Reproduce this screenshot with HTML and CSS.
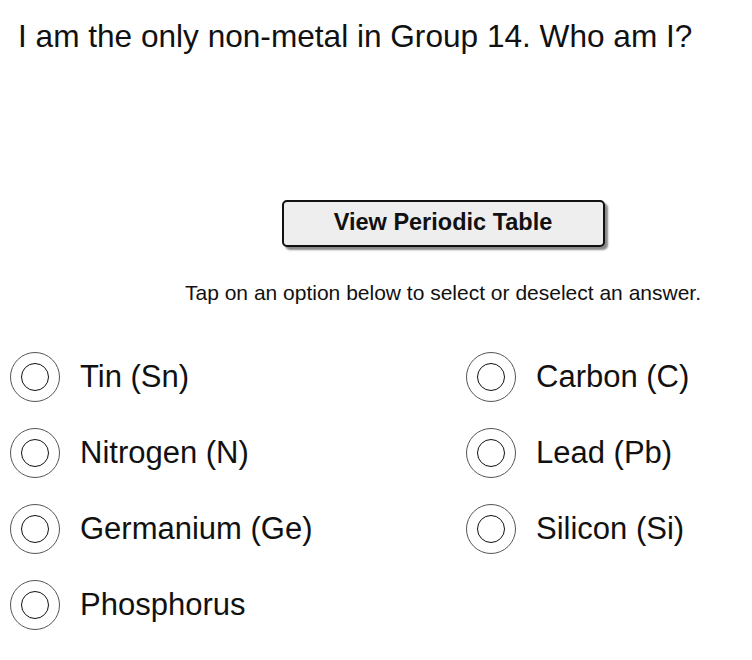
FILE: index.html
```html
<!DOCTYPE html>
<html>
<head>
<meta charset="utf-8">
<link rel="stylesheet" href="styles.css">
</head>
<body>
<div class="page">
  <h1 class="question">I am the only non-metal in Group 14. Who am I?</h1>
  <div class="actions">
    <button class="table-btn">View Periodic Table</button>
  </div>
  <p class="hint">Tap on an option below to select or deselect an answer.</p>
  <div class="options">
    <div class="option"><span class="radio"><span class="dot"></span></span><span class="label">Tin (Sn)</span></div>
    <div class="option"><span class="radio"><span class="dot"></span></span><span class="label">Carbon (C)</span></div>
    <div class="option"><span class="radio"><span class="dot"></span></span><span class="label">Nitrogen (N)</span></div>
    <div class="option"><span class="radio"><span class="dot"></span></span><span class="label">Lead (Pb)</span></div>
    <div class="option"><span class="radio"><span class="dot"></span></span><span class="label">Germanium (Ge)</span></div>
    <div class="option"><span class="radio"><span class="dot"></span></span><span class="label">Silicon (Si)</span></div>
    <div class="option"><span class="radio"><span class="dot"></span></span><span class="label">Phosphorus</span></div>
  </div>
</div>
</body>
</html>
```

FILE: styles.css
```css
html, body {
  margin: 0;
  padding: 0;
  background: #ffffff;
}
body {
  font-family: "Liberation Sans", Arial, Helvetica, sans-serif;
  color: #111111;
}
.page {
  width: 752px;
  height: 660px;
  overflow: hidden;
}
.question {
  margin: 0;
  padding: 18px 0 0 18px;
  font-size: 31.6px;
  font-weight: normal;
  line-height: 36px;
}
.actions {
  display: flex;
  justify-content: center;
  padding: 146px 0 0 134px;
}
.table-btn {
  width: 323px;
  height: 47px;
  border: 2px solid #111;
  border-radius: 5px;
  background: #eeeeee;
  box-shadow: 3px 3px 2px #888888;
  font-family: "Liberation Sans", Arial, Helvetica, sans-serif;
  font-weight: bold;
  font-size: 23.5px;
  color: #111;
  padding: 0 0 2px 0;
}
.hint {
  margin: 0;
  padding: 34px 0 0 134px;
  text-align: center;
  font-size: 21px;
  line-height: 24px;
}
.options {
  display: grid;
  grid-template-columns: 456px 1fr;
  row-gap: 26px;
  padding: 47px 0 0 10px;
}
.option {
  display: flex;
  align-items: center;
  height: 50px;
}
.radio {
  width: 48px;
  height: 48px;
  border: 1px solid #555;
  border-radius: 50%;
  display: flex;
  align-items: center;
  justify-content: center;
  flex: none;
}
.dot {
  width: 26px;
  height: 26px;
  border: 1.5px solid #111;
  border-radius: 50%;
}
.label {
  margin-left: 20px;
  font-size: 31px;
  line-height: 36px;
}
```
